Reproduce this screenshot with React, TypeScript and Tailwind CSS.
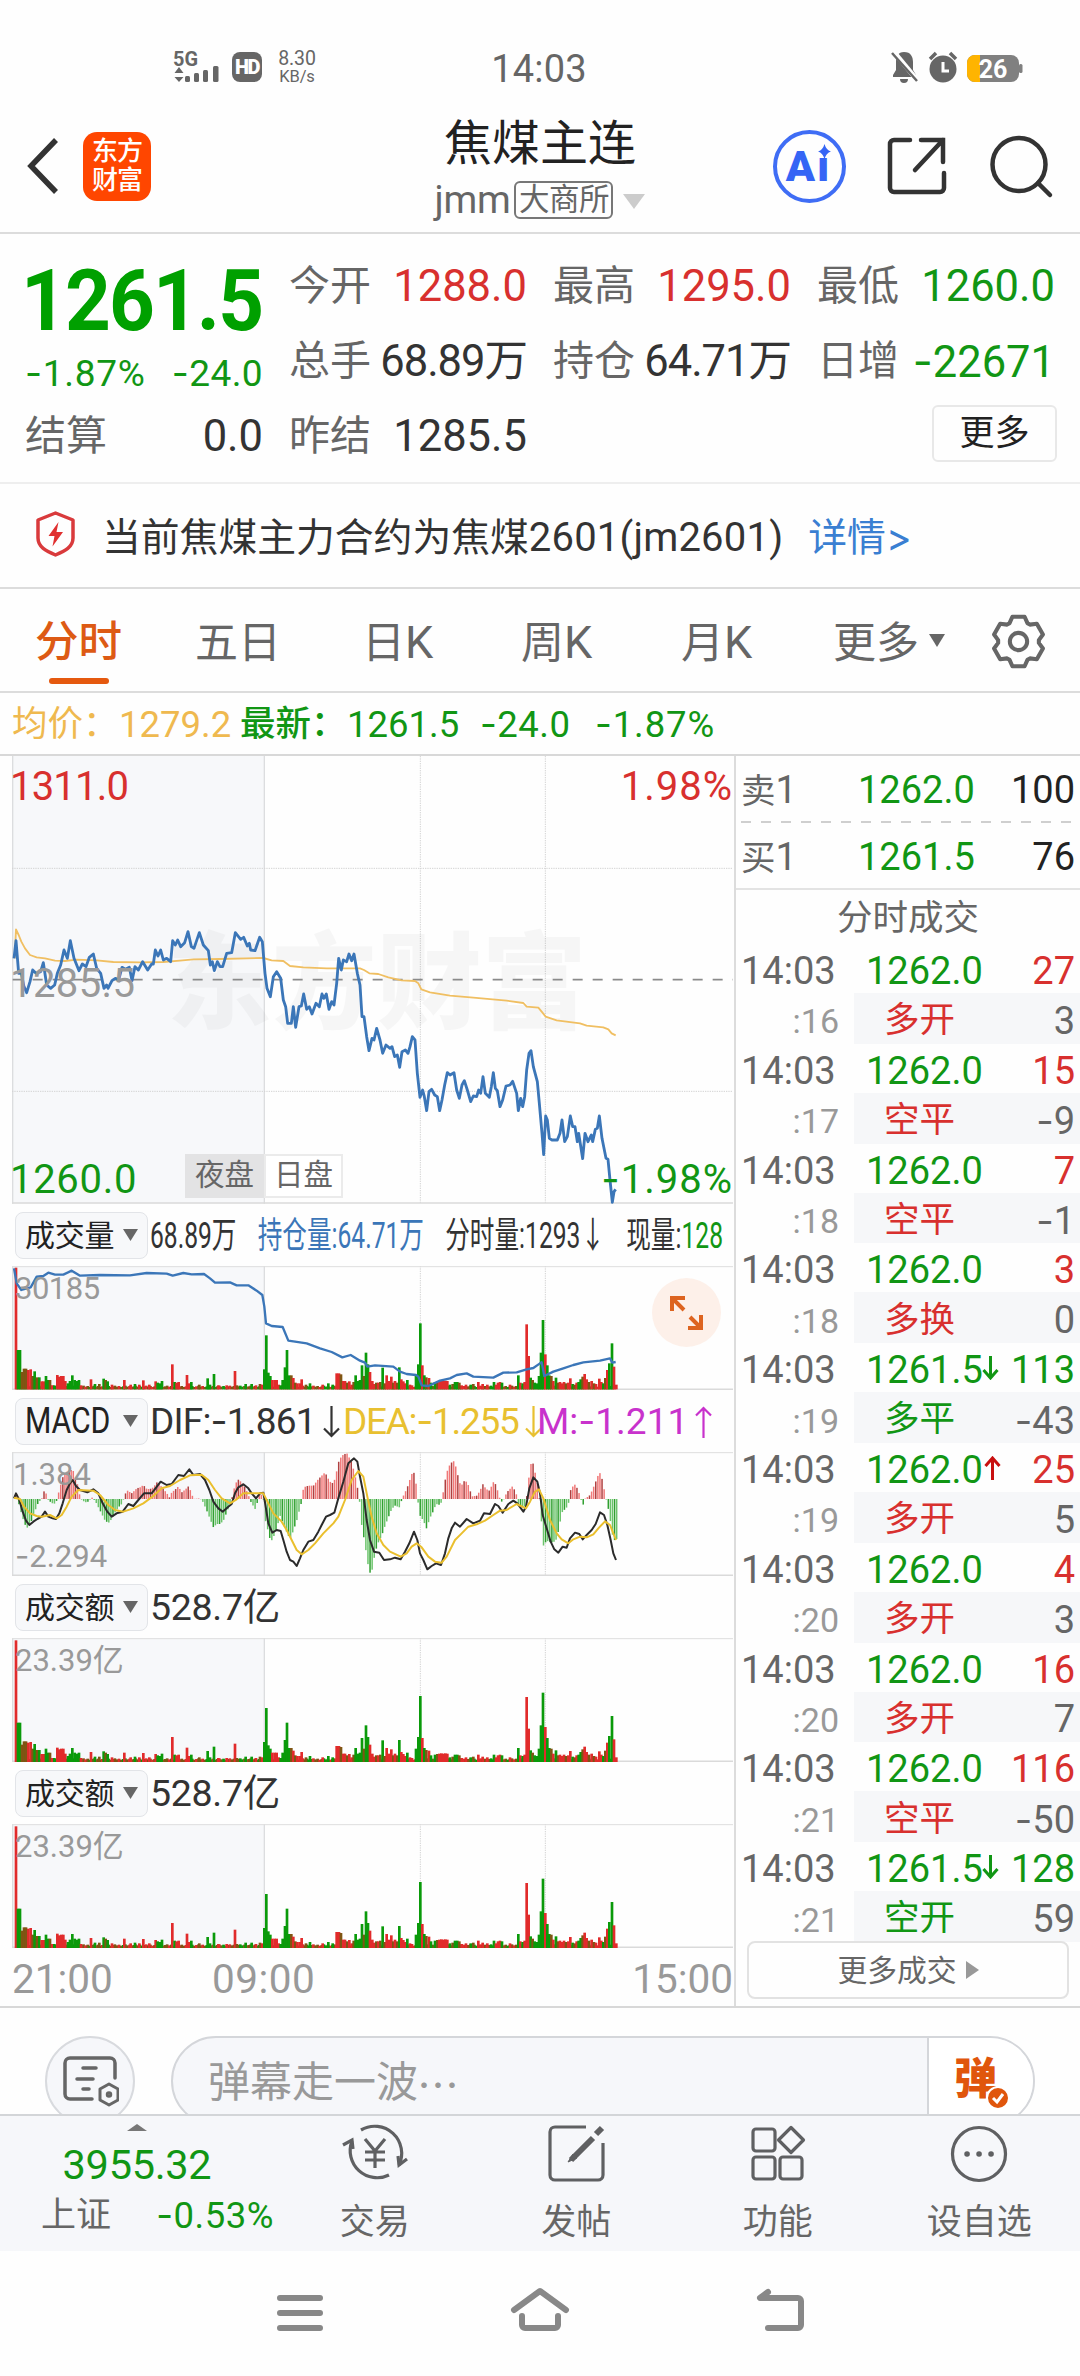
import React from "react";

type Tone = "r" | "g" | "o";

const GREEN = "text-[#119614]";
const RED = "text-[#d8302e]";
const TONES: Record<Tone, string> = { r: "#e12b2b", g: "#0a9a0a", o: "#7f5513" };

/* ---- chart series; x runs 0-2202, y is in thirds of a pixel ---- */

const PRICE =
  "42,655 48,602 56,700 64,700 72,740 80,758 90,725 98,690 108,700 122,695 130,668 140,735 152,745 164,735 172,700 182,675 192,630 202,655 211,602 222,655 237,692 247,672 258,680 268,652 280,642 290,685 302,700 312,745 320,735 324,745 336,722 346,715 356,720 366,682 376,688 388,682 396,722 405,680 415,690 428,665 443,690 455,672 460,672 466,630 474,648 482,630 490,660 500,655 512,665 518,602 526,615 533,600 542,620 554,608 564,575 574,620 582,625 598,578 610,615 625,632 631,675 637,665 643,692 652,665 660,680 668,680 680,640 695,638 706,578 722,598 731,592 742,618 748,610 752,630 765,632 779,592 787,605 795,700 801,745 811,770 820,710 830,695 842,715 850,780 857,800 863,850 874,850 880,800 887,862 897,800 904,798 911,762 920,808 928,800 936,822 948,790 958,800 966,762 972,775 979,762 987,808 995,785 1002,795 1010,730 1016,655 1024,690 1030,660 1040,665 1047,642 1055,662 1062,642 1072,700 1080,735 1086,830 1092,830 1100,890 1107,932 1116,895 1122,900 1130,865 1140,900 1148,940 1158,915 1170,925 1176,920 1184,950 1192,945 1199,982 1206,935 1216,930 1224,940 1230,920 1237,890 1245,900 1252,1000 1260,1072 1268,1050 1273,1070 1280,1112 1287,1055 1295,1048 1304,1065 1312,1070 1319,1112 1326,1080 1334,1035 1342,998 1350,1005 1362,998 1370,1050 1378,1075 1386,1035 1393,1022 1402,1050 1412,1085 1420,1068 1430,1070 1436,1050 1442,1060 1449,1010 1456,1060 1468,1072 1474,1040 1480,998 1486,1045 1492,1052 1500,1100 1508,1080 1518,1038 1530,1035 1538,1024 1550,1060 1555,1112 1562,1075 1568,1100 1574,1070 1580,990 1587,940 1593,932 1600,980 1612,1025 1618,1090 1626,1180 1631,1244 1637,1128 1642,1140 1648,1195 1656,1200 1672,1200 1680,1180 1686,1140 1694,1205 1702,1190 1711,1128 1718,1160 1725,1160 1732,1205 1736,1180 1748,1256 1755,1180 1764,1205 1774,1185 1778,1205 1786,1168 1792,1165 1798,1128 1806,1195 1818,1255 1824,1258 1830,1320 1837,1387 1842,1355 1847,1348";

const AVERAGE =
  "44,655 48,568 56,585 64,605 75,625 90,645 110,652 135,655 165,662 195,663 230,659 290,661 340,666 420,667 490,666 540,662 580,658 660,657 740,655 790,654 815,661 850,663 870,678 910,682 980,685 1080,685 1092,690 1108,700 1135,702 1165,712 1205,721 1245,723 1255,730 1264,748 1290,757 1350,767 1420,773 1520,782 1570,789 1580,800 1615,803 1625,815 1637,830 1670,841 1740,850 1760,857 1810,862 1825,868 1835,880 1847,886";

const OPEN_INTEREST =
  "42,205 50,250 64,270 92,262 110,230 130,228 145,218 165,224 190,224 215,212 240,227 300,225 390,226 440,219 500,221 518,227 550,219 575,223 612,222 630,235 645,248 690,247 710,256 745,256 770,272 787,285 793,320 798,370 815,378 848,381 865,422 920,430 960,445 995,456 1027,472 1052,465 1080,482 1095,488 1102,500 1125,496 1180,500 1200,515 1220,522 1248,525 1255,530 1265,556 1285,558 1320,542 1350,535 1370,525 1400,520 1420,530 1480,533 1510,518 1550,517 1580,508 1600,504 1620,490 1625,487 1633,528 1660,515 1690,505 1720,495 1750,487 1800,482 1830,475 1837,488 1847,486";

const DIF =
  "42,895 48,880 58,900 68,935 78,962 88,975 100,965 112,957 125,950 135,935 145,950 158,955 168,957 178,940 188,910 200,870 210,850 218,840 228,858 240,870 262,877 280,868 295,880 308,910 322,935 335,950 350,940 368,935 385,912 400,918 415,900 432,880 455,880 482,845 500,855 515,852 535,825 552,828 568,808 580,825 600,822 615,840 628,870 640,905 655,925 668,935 685,920 695,912 705,880 715,862 730,853 745,865 755,880 768,895 780,880 790,878 797,920 805,970 817,998 830,990 842,993 850,1020 860,1055 870,1080 880,1085 890,1098 900,1075 910,1050 925,1025 940,1020 955,995 965,975 978,950 990,945 1003,938 1015,895 1030,845 1045,790 1062,775 1072,785 1080,830 1090,880 1100,960 1110,1020 1122,1055 1138,1058 1152,1080 1170,1078 1185,1073 1202,1078 1215,1055 1228,1030 1242,995 1252,1020 1260,1060 1270,1080 1282,1108 1295,1098 1308,1090 1323,1095 1335,1060 1345,1015 1355,985 1365,968 1380,980 1400,957 1420,970 1440,962 1452,940 1470,942 1485,912 1495,918 1508,938 1525,912 1540,902 1552,910 1570,935 1578,920 1588,865 1600,832 1612,845 1620,880 1628,945 1640,985 1652,1025 1663,1048 1675,1058 1688,1040 1700,1043 1710,1015 1725,998 1738,1002 1748,1018 1760,1005 1775,990 1787,972 1800,937 1812,945 1822,975 1832,1020 1840,1060 1848,1080";

const DEA =
  "42,893 60,897 72,920 90,940 110,948 125,950 150,945 170,955 185,945 200,920 215,890 235,870 280,872 300,885 325,915 345,930 370,935 400,925 430,910 460,888 485,865 510,858 540,840 570,826 605,824 625,840 645,870 665,895 690,910 710,898 730,880 760,880 790,880 805,910 820,940 845,965 860,990 875,1020 890,1050 905,1063 925,1050 945,1030 970,1000 1000,970 1015,950 1035,900 1055,840 1075,813 1090,830 1102,890 1115,950 1130,1000 1150,1035 1170,1055 1202,1070 1220,1060 1235,1040 1250,1030 1265,1042 1285,1070 1305,1085 1325,1088 1340,1070 1365,1020 1385,1000 1405,980 1430,973 1455,962 1480,945 1500,932 1520,930 1550,912 1578,925 1590,905 1605,875 1617,868 1630,895 1650,960 1670,1000 1685,1018 1705,1030 1720,1018 1740,1010 1760,1012 1780,1003 1795,985 1815,964 1830,975 1840,1000 1848,1020";

const HISTOGRAM =
  "42:5 48:25 54:-5 60:-30 66:-50 72:-70 80:-88 86:-80 92:-75 98:-50 105:-35 115:-10 125:0 130:22 136:25 142:0 150:-8 160:-15 168:-12 173:10 180:35 186:60 192:75 200:82 210:80 217:95 224:65 232:45 238:15 245:-2 255:-10 265:-8 275:5 285:-5 295:-25 305:-45 315:-65 325:-72 335:-60 345:-40 355:-25 365:-15 370:-2 375:15 385:28 392:15 400:22 410:32 420:35 430:42 440:30 450:30 460:35 470:50 480:42 490:30 500:18 508:5 515:20 525:28 535:38 545:20 555:28 565:38 573:22 580:0 600:2 608:-8 618:-30 630:-60 640:-85 650:-75 660:-75 670:-65 680:-40 692:-10 700:20 705:45 715:58 725:50 735:35 745:12 752:-8 765:-30 772:-10 778:20 784:12 790:0 796:-65 805:-100 812:-130 822:-110 832:-80 840:-50 850:-75 860:-100 870:-120 880:-95 890:-65 900:-25 906:-5 910:35 925:40 940:40 955:60 965:70 975:80 985:60 995:45 1005:60 1015:110 1025:130 1040:138 1055:110 1065:70 1075:20 1080:-20 1085:-80 1092:-120 1100:-170 1105:-205 1112:-228 1118:-205 1125:-160 1135:-130 1145:-110 1155:-80 1165:-55 1175:-30 1185:-20 1198:-25 1205:-3 1212:15 1220:30 1230:60 1237:80 1243:78 1248:45 1254:-10 1260:-50 1270:-65 1280:-90 1288:-60 1298:-40 1308:-15 1320:-18 1326:-5 1332:40 1340:80 1350:105 1360:115 1370:90 1377:50 1385:42 1393:55 1402:50 1410:25 1417:8 1430:10 1440:25 1448:45 1458:30 1468:25 1475:40 1482:55 1490:35 1498:5 1505:-8 1512:0 1520:20 1537:38 1548:20 1552:-10 1562:-25 1575:-22 1582:20 1588:80 1594:112 1600:105 1607:70 1615:30 1620:-20 1626:-90 1630:-140 1640:-125 1650:-130 1660:-130 1670:-120 1678:-80 1686:-40 1700:-25 1707:-8 1712:28 1723:45 1733:30 1742:2 1748:-22 1754:0 1770:12 1780:35 1790:60 1798:82 1806:60 1812:30 1818:0 1823:-20 1830:-60 1840:-125 1850:-120"
    .split(" ")
    .map((p) => p.split(":").map(Number));

const VOLUME =
  "48:365r 54:118g 60:118g 66:52o 72:62o 78:62o 85:58r 92:60r 98:40o 104:54g 111:36o 118:36g 125:24r 131:24r 138:40g 144:28g 150:28o 157:12r 163:12g 172:43r 178:38r 184:40r 190:40r 196:25r 204:18g 210:25g 217:42g 224:28g 230:25g 237:28g 243:12r 273:30r 285:16g 298:16o 311:32g 317:28o 323:24g 336:14r 373:28r 392:14r 405:16g 418:14r 430:27r 448:14r 467:24r 473:20g 480:18g 486:25g 517:75r 524:22g 530:20r 536:22r 561:43r 567:18r 574:22g 598:14o 623:33g 630:14g 642:46g 655:12r 680:12r 705:55r 711:12o 737:16g 755:16g 768:12r 780:16o 787:14r 793:60g 799:162g 805:50g 811:40g 817:28r 824:28r 830:28r 836:14r 842:12g 848:28g 855:66g 861:118g 867:42g 874:42o 880:34r 886:20o 892:18r 899:18r 905:30r 918:14o 930:18g 968:14r 985:18g 998:14g 1010:48r 1017:48r 1023:45o 1030:25r 1035:25r 1042:20o 1048:24r 1055:14r 1061:22o 1067:42g 1073:25g 1080:28g 1086:72g 1092:40o 1098:110g 1104:75g 1110:52r 1117:25r 1123:16r 1129:20o 1135:20r 1141:22o 1148:65g 1154:18o 1160:42r 1166:25r 1174:38r 1180:20o 1185:25r 1192:20o 1198:66g 1204:30r 1210:24r 1216:18r 1222:28g 1230:14r 1236:12r 1248:40g 1255:75g 1261:198g 1267:72r 1273:42g 1279:36o 1287:34r 1293:20g 1305:22g 1312:24o 1318:25r 1324:26r 1330:25r 1336:26r 1342:25r 1350:14g 1358:16o 1365:22g 1372:22g 1378:20o 1385:12r 1398:14r 1412:14g 1420:16o 1435:22r 1448:16r 1462:14r 1482:22g 1488:14r 1494:20r 1500:22r 1506:20g 1530:14r 1555:42g 1561:20r 1568:18g 1574:22r 1580:195r 1586:100r 1592:35g 1598:28o 1604:20g 1612:18g 1617:40g 1623:110g 1629:208g 1636:105r 1642:72g 1648:42g 1654:40o 1660:25r 1668:35g 1674:20o 1680:22r 1686:18r 1692:22r 1698:18o 1705:20r 1711:33r 1718:16g 1724:14o 1730:20r 1736:22g 1742:30g 1748:38o 1754:46r 1760:30r 1767:22o 1775:25r 1782:18o 1788:16r 1798:32r 1804:22r 1810:18g 1816:34o 1822:58r 1828:78g 1836:138g 1842:68r 1849:14r"
    .split(" ")
    .map((p) => {
      const [x, rest] = p.split(":");
      return { x: Number(x), h: parseInt(rest, 10), tone: rest.slice(-1) as Tone };
    });

const QUIET = Array.from({ length: 287 }, (_, i) => ({
  x: 50 + i * 6.27,
  h: 7 + ((i * 7) % 5),
  tone: (["o", "r", "o", "g", "o", "r"] as Tone[])[(i * 5 + (i >> 2)) % 6],
}));

function histogramAt(x: number) {
  for (let i = 1; i < HISTOGRAM.length; i++) {
    const [x0, v0] = HISTOGRAM[i - 1];
    const [x1, v1] = HISTOGRAM[i];
    if (x <= x1) return v0 + ((v1 - v0) * (x - x0)) / (x1 - x0);
  }
  return 0;
}

/* A number whose leading minus uses the wider Inter dash. */
function Num({ children }: { children: string }) {
  if (!children.startsWith("-")) return <>{children}</>;
  return (
    <>
      <span className="font-[Inter]">-</span>
      {children.slice(1)}
    </>
  );
}

function VolumeBars({ base }: { base: number }) {
  return (
    <g>
      {[...QUIET, ...VOLUME].map((b, i) => (
        <rect key={i} x={b.x - 4} y={base - b.h} width={8} height={b.h} fill={TONES[b.tone]} />
      ))}
    </g>
  );
}

function Grid({ top, bottom }: { top: number; bottom: number }) {
  return (
    <g>
      <rect x={38} y={top} width={754} height={bottom - top} fill="#f7f8fa" />
      <path d={`M38 ${top}V${bottom}M793 ${top}V${bottom}`} stroke="#dcdddf" strokeWidth={4} />
      <path d={`M1261 ${top}V${bottom}M1636 ${top}V${bottom}`} stroke="#d3d3d3" strokeWidth={3} strokeDasharray="4 3" />
      <path d={`M36 ${bottom - 2}H2199`} stroke="#dadada" strokeWidth={5} />
    </g>
  );
}

function SubChart({ top, bottom, children }: { top: number; bottom: number; children: React.ReactNode }) {
  return (
    <svg className="block h-[124px] w-[734px]" viewBox={`0 ${top} 2202 372`}>
      <Grid top={top} bottom={bottom} />
      <path d={`M36 ${top + 2}H2199`} stroke="#dedede" strokeWidth={3} />
      {children}
    </svg>
  );
}

function Caret({ className, d = "M0 0H15L7.5 12Z" }: { className: string; d?: string }) {
  return (
    <svg className={className} viewBox="0 0 15 12" preserveAspectRatio="none" fill="currentColor">
      <path d={d} />
    </svg>
  );
}

function IndicatorRow({ name, children }: { name: React.ReactNode; children: React.ReactNode }) {
  return (
    <div className="flex h-[62px] items-center pl-[15px]">
      <div className="flex h-[47px] w-[133px] shrink-0 items-center justify-between rounded-[8px] border border-[#e2e4e8] bg-[#f7f8fa] pr-[9px] pl-[9px] text-[30px] tracking-[-0.2px] text-[#222]">
        <span className="whitespace-nowrap">{name}</span>
        <Caret className="h-[12px] w-[15px] text-[#666]" />
      </div>
      {children}
    </div>
  );
}

/* ---- page sections ---- */

function StatusBar() {
  return (
    <div className="flex h-[112px] items-start pt-[50px] text-[#666]">
      <svg className="mt-[-10px] ml-[172px] h-[44px] w-[50px] shrink-0" viewBox="0 -10 50 44" fill="#666">
        <text x="1" y="16" fontSize="19.500" fontWeight="700" fontFamily="Roboto" textLength="25" lengthAdjust="spacingAndGlyphs">5G</text>
        <path d="M7 17l4.500 6h-9zM7 32l4.500-5h-9z" />
        <rect x="13" y="26" width="5" height="6" rx="1.500" />
        <rect x="22" y="23" width="5" height="9" rx="1.500" />
        <rect x="31" y="20" width="5" height="12" rx="1.500" />
        <rect x="41" y="16" width="5.500" height="16" rx="1.500" />
      </svg>
      <div className="mt-[2px] ml-[10px] flex h-[30px] w-[30px] items-center justify-center rounded-[8px] bg-[#666] text-[20px] font-black tracking-[-1.500px] text-white">HD</div>
      <div className="ml-[15px] w-[40px] text-center text-[19.500px] leading-[18px] tracking-[-0.100px]">
        8.30
        <div className="text-[16.500px] leading-[17px] whitespace-nowrap">KB/s</div>
      </div>
      <div className="ml-[171px] w-[102px] text-center text-[38px] leading-[38px] tracking-[0.2px]">14:03</div>
      <svg className="ml-[300px] h-[34px] w-[134px] shrink-0" viewBox="0 0 134 34">
        <path d="M14 2c7 0 9 5 9 10v8l3 5v2H3v-2l3-5v-8C6 7 8 2 14 2zM10 29h8a4 4 0 0 1-8 0z" fill="#666" />
        <path d="M3 1L28 31" stroke="#fff" strokeWidth="5" />
        <path d="M2 3L27 31" stroke="#666" strokeWidth="2.500" />
        <circle cx="53" cy="19" r="13.500" fill="#666" />
        <path d="M40 9l6-6M66 9l-6-6" stroke="#666" strokeWidth="3.500" />
        <path d="M53 12v9h6" stroke="#fff" strokeWidth="3" fill="none" />
        <rect x="77" y="5" width="52" height="27" rx="8" fill="#808080" />
        <rect x="129" y="14" width="3.500" height="9" rx="1.500" fill="#808080" />
        <path d="M90 5h-5a8 8 0 0 0-8 8v11a8 8 0 0 0 8 8h5z" fill="#ffb400" />
        <text x="103" y="27.500" textAnchor="middle" fontSize="25" fontWeight="700" fontFamily="Roboto" fill="#fff">26</text>
      </svg>
    </div>
  );
}

function Header() {
  return (
    <div className="relative flex h-[122px] items-center border-b-2 border-[#dcdcdc]">
      <svg className="ml-[24px] h-[60px] w-[36px] -translate-y-[6px]" viewBox="0 0 36 60" fill="none" stroke="#333" strokeWidth="5.500">
        <path d="M32 4L7 30l25 26" />
      </svg>
      <div className="ml-[23px] flex h-[69px] w-[68px] -translate-y-[6px] flex-col items-center justify-center rounded-[14px] bg-[#ff4600] pb-[1px] text-[26px] leading-[29px] font-medium tracking-[-1px] text-white">
        <span>东方</span>
        <span>财富</span>
      </div>
      <div className="ml-[237px] flex w-[304px] flex-col items-center">
        <div className="-mt-[2px] text-[48px] leading-[60px] text-[#222]">焦煤主连</div>
        <div className="flex h-[54px] items-center text-[38.500px] text-[#666]">
          <span className="-mt-[2px] tracking-[-0.300px]">jmm</span>
          <span className="-mt-[2px] ml-[4px] flex h-[38px] w-[99px] items-center justify-center rounded-[6px] border-2 border-[#777] text-[30.500px] tracking-[-0.500px]">大商所</span>
          <Caret className="ml-[10px] h-[15px] w-[22px] text-[#ccc]" />
        </div>
      </div>
      <div className="absolute top-[18px] left-[773px] flex h-[73px] w-[73px] items-center justify-center rounded-full border-4 border-[#3f6df5] text-[43px] font-black tracking-[1px] text-[#3565f5]">
        <span className="-ml-[3px] flex leading-none">A<span className="relative ml-[1px]">ı
          <svg className="absolute -top-[1px] left-[1px] h-[15px] w-[13px]" viewBox="0 0 12 14" fill="#3565f5"><path d="M6 0Q7.500 5.500 12 7 7.500 8.500 6 14 4.500 8.500 0 7 4.500 5.500 6 0Z" /></svg>
        </span></span>
      </div>
      <svg className="absolute top-[23px] left-[885px] h-[64px] w-[64px]" viewBox="0 0 64 64" fill="none" stroke="#333" strokeWidth="4.500">
        <path d="M25 5H9a4 4 0 0 0-4 4v44a4 4 0 0 0 4 4h46a4 4 0 0 0 4-4V38" strokeLinecap="round" />
        <path d="M36 5h22v22M58 5L30 35" strokeLinecap="round" />
      </svg>
      <svg className="absolute top-[21px] left-[988px] h-[66px] w-[66px]" viewBox="0 0 66 66" fill="none" stroke="#333" strokeWidth="4.500">
        <circle cx="31" cy="31.500" r="26.500" />
        <path d="M50 50l12 12" strokeLinecap="round" />
      </svg>
    </div>
  );
}

function Quote({ label, value, tone = "text-[#333]", tight = "" }: { label: string; value: string; tone?: string; tight?: string }) {
  return (
    <div className="flex h-[75px] items-center justify-between pt-[1px] whitespace-nowrap">
      <span className="text-[41px] text-[#666]">{label}</span>
      <span className={`text-[43.500px] ${tight} ${tone}`}><Num>{value}</Num></span>
    </div>
  );
}

function QuotePanel() {
  return (
    <div className="grid h-[250px] grid-cols-4 gap-x-[26px] border-b-2 border-[#eee] px-[25px] pt-[15px]">
      <div>
        <div className="flex h-[98px] items-center pt-[8px] text-[85px] font-bold text-[#00a000]">
          <span className="-ml-[4px] inline-block origin-left scale-x-[0.940] tracking-[-2px]">1261.5</span>
        </div>
        <div className={`flex h-[52px] items-center justify-between text-[37px] ${GREEN}`}>
          <span className="tracking-[0.700px]"><Num>-1.87%</Num></span>
          <span className="tracking-[0.400px]"><Num>-24.0</Num></span>
        </div>
        <Quote label="结算" value="0.0" />
      </div>
      <div>
        <Quote label="今开" value="1288.0" tone={RED} />
        <Quote label="总手" value="68.89万" tight="tracking-[-1px]" />
        <Quote label="昨结" value="1285.5" />
      </div>
      <div>
        <Quote label="最高" value="1295.0" tone={RED} />
        <Quote label="持仓" value="64.71万" tight="tracking-[-1px]" />
      </div>
      <div className="flex flex-col">
        <Quote label="最低" value="1260.0" tone={GREEN} />
        <Quote label="日增" value="-22671" tone={GREEN} />
        <div className="mt-[6px] -mr-[2px] flex h-[57px] w-[125px] items-center justify-center self-end rounded-[6px] border-2 border-[#e8e8e8] pt-[1px] text-[35px] text-[#222]">更多</div>
      </div>
    </div>
  );
}

function Notice() {
  return (
    <div className="flex h-[105px] items-center border-b-2 border-[#dcdcdc] text-[38.8px] whitespace-nowrap text-[#333]">
      <svg className="ml-[34px] h-[48px] w-[43px] -translate-y-[2px]" viewBox="0 0 43 48" fill="none">
        <path d="M21.500 3L39 10v18c0 9-8 13-17.500 17C12 41 4 37 4 28V10z" stroke="#d93a3c" strokeWidth="3.500" strokeLinejoin="round" />
        <path d="M24.500 12L14.500 26h6l-2 10.500L29 22h-6.500z" fill="#e03030" />
      </svg>
      <span className="ml-[25px] pt-[4px]">当前焦煤主力合约为焦煤<span className="text-[40px] tracking-[0.200px]">2601(jm2601)</span></span>
      <span className="ml-[25px] pt-[4px] text-[#3a7fd2]">详情<span className="font-[Inter]">&gt;</span></span>
    </div>
  );
}

const GEAR = Array.from({ length: 6 }, (_, k) =>
  [[-26, 20], [-14, 25], [14, 25], [26, 20]]
    .map(([a, r]) => {
      const t = ((k * 60 - 90 + a) * Math.PI) / 180;
      return `${(28 + r * Math.cos(t)).toFixed(1)} ${(28 + r * Math.sin(t)).toFixed(1)}`;
    })
    .join("L"),
).join("L");

function Tabs() {
  return (
    <div className="relative h-[104px] border-b-2 border-[#dcdcdc] text-[43px] text-[#666]">
      <div className="flex h-full items-center pt-[6px]">
        <span className="ml-[35px] w-[160px] text-[43.500px] font-medium text-[#dd5a14]">分时</span>
        <span className="w-[167px]">五日</span>
        <span className="w-[159px]">日<span className="text-[45px]">K</span></span>
        <span className="w-[160px]">周<span className="text-[45px]">K</span></span>
        <span className="w-[152px]">月<span className="text-[45px]">K</span></span>
        <span>更多</span>
        <Caret className="mb-[5px] ml-[10px] h-[13px] w-[16px]" />
      </div>
      <svg className="absolute top-[24px] left-[990px] h-[57px] w-[57px]" viewBox="0 0 56 56" fill="none" stroke="#666" strokeWidth="4" strokeLinejoin="round">
        <path d={`M${GEAR}Z`} />
        <circle cx="28" cy="28" r="8.500" />
      </svg>
      <div className="absolute bottom-[7px] left-[49px] h-[6px] w-[60px] rounded-full bg-[#e5590f]" />
    </div>
  );
}

function Summary() {
  return (
    <div className={`flex h-[63px] items-center border-b-2 border-[#d8d8d8] pt-[3px] pl-[12px] text-[36.500px] whitespace-nowrap ${GREEN}`}>
      <span className="w-[107px] text-[35.500px] text-[#efb94f]">均价：</span>
      <span className="w-[121px] text-[#efb94f]">1279.2</span>
      <span className="w-[107px] text-[35.500px] font-medium">最新：</span>
      <span className="w-[133px]">1261.5</span>
      <span className="w-[115px] tracking-[0.500px]"><Num>-24.0</Num></span>
      <span className="tracking-[0.900px]"><Num>-1.87%</Num></span>
    </div>
  );
}

function PriceChart() {
  return (
    <div className="relative h-[448px] text-[40px] leading-none">
      <svg className="block h-[448px] w-[734px]" viewBox="0 48 2202 1344">
        <Grid top={48} bottom={1391} />
        <path d="M36 385H2199M36 1054H2199" stroke="#d3d3d3" strokeWidth={3} strokeDasharray="4 3" />
        <text x={500} y={840} fontSize={315} fontWeight={900} fontFamily="Noto Sans CJK SC" fill="#000" fillOpacity={0.03}>东方财富</text>
        <path d="M38 719H2199" stroke="#8a8a8a" strokeWidth={5} strokeDasharray="30 30" />
        <polyline points={AVERAGE} fill="none" stroke="#f0bf62" strokeWidth={5.500} strokeLinejoin="round" />
        <polyline points={PRICE} fill="none" stroke="#3b76b8" strokeWidth={8.500} strokeLinejoin="round" />
      </svg>
      <span className={`absolute top-[11px] left-[10px] tracking-[-0.800px] ${RED}`}>1311.0</span>
      <span className={`absolute top-[11px] right-[1px] tracking-[1px] ${RED}`}>1.98%</span>
      <span className="absolute top-[208px] left-[10px] tracking-[0.400px] text-[#999]">1285.5</span>
      <span className={`absolute bottom-[4px] left-[10px] tracking-[0.700px] ${GREEN}`}>1260.0</span>
      <span className={`absolute right-[1px] bottom-[4px] tracking-[1px] ${GREEN}`}><Num>-1.98%</Num></span>
      <div className="absolute bottom-[6px] left-[185px] flex h-[44px] text-[29.5px] text-[#666]">
        <span className="flex w-[79px] items-center justify-center bg-[#e3e3e4]">夜盘</span>
        <span className="flex w-[79px] items-center justify-center border-2 border-[#ebebeb] bg-white">日盘</span>
      </div>
    </div>
  );
}

function Arrow({ up = false }: { up?: boolean }) {
  return (
    <svg className="ml-[7px] h-[32px] w-[17px] shrink-0" viewBox="0 0 17 32" fill="none" stroke="currentColor" strokeWidth="2.200">
      <path d={up ? "M8.500 32V2M1 9.500l7.500-7.500L16 9.500" : "M8.500 0v30M1 22.500l7.500 7.500 7.500-7.500"} />
    </svg>
  );
}

function Charts() {
  return (
    <div className="w-[734px]">
      <PriceChart />
      <IndicatorRow name="成交量">
        <div className="-mr-[300px] ml-[2px] flex w-[872px] shrink-0 origin-left scale-x-[0.684] gap-[31px] pt-[2px] text-[36px] whitespace-nowrap text-[#333]">
          <span>68.89万</span>
          <span className="text-[#3b76b8]">持仓量:64.71万</span>
          <span>分时量:1293↓</span>
          <span>现量:<span className={GREEN}>128</span></span>
        </div>
      </IndicatorRow>
      <div className="relative">
        <SubChart top={198} bottom={570}>
          <VolumeBars base={568} />
          <polyline points={OPEN_INTEREST} fill="none" stroke="#3b76b8" strokeWidth={7} strokeLinejoin="round" />
        </SubChart>
        <span className="absolute top-[5px] left-[15px] text-[31px] leading-[36px] tracking-[-0.500px] text-[#999]">30185</span>
        <svg className="absolute top-[12px] right-[13px] h-[69px] w-[69px]" viewBox="0 0 69 69" fill="none" stroke="#dd6420" strokeWidth="4">
          <circle cx="34.500" cy="34.500" r="34.500" fill="#fdf0e9" stroke="none" />
          <path d="M20 33V20h13M20 20l12 12M49 37v13H36M49 50L38 39" />
        </svg>
      </div>
      <IndicatorRow name={<span className="-mr-4 inline-block origin-left scale-x-[0.840] text-[36px]">MACD</span>}>
        <div className="ml-[2px] flex pt-[1px] text-[37px] whitespace-nowrap text-[#333]">
          <span className="flex w-[193px] items-center tracking-[-0.800px]"><span>DIF:<Num>-1.861</Num></span><Arrow /></span>
          <span className="flex w-[194px] items-center tracking-[-1.300px] text-[#e8c030]"><span>DEA:<Num>-1.255</Num></span><Arrow /></span>
          <span className="flex items-center text-[#c832cc]"><span>M:<Num>-1.211</Num></span><Arrow up /></span>
        </div>
      </IndicatorRow>
      <div className="relative">
        <SubChart top={756} bottom={1128}>
          {Array.from({ length: 289 }, (_, i) => {
            const x = 44 + i * 6.27;
            const v = histogramAt(x);
            const fill = v > 0 ? (i % 3 === 2 ? "#b04040" : "#f07878") : i % 3 === 2 ? "#30a030" : "#6cc46c";
            return <rect key={i} x={x - 2} y={v > 0 ? 897 - v : 897} width={4.500} height={Math.abs(v)} fill={fill} />;
          })}
          <polyline points={DIF} fill="none" stroke="#2b2b2b" strokeWidth={6} strokeLinejoin="round" />
          <polyline points={DEA} fill="none" stroke="#eabf2d" strokeWidth={6} strokeLinejoin="round" />
        </SubChart>
        <span className="absolute top-[5px] left-[13px] text-[31px] leading-[36px] text-[#999]">1.384</span>
        <span className="absolute bottom-[1px] left-[15px] text-[31px] leading-[36px] text-[#999]"><Num>-2.294</Num></span>
      </div>
      {[0, 1].map((n) => (
        <React.Fragment key={n}>
          <IndicatorRow name="成交额">
            <span className="ml-[2px] pt-[1px] text-[37.500px] tracking-[-0.300px] text-[#333]">528.7亿</span>
          </IndicatorRow>
          <div className="relative">
            <SubChart top={198} bottom={570}>
              <VolumeBars base={570} />
            </SubChart>
            <span className="absolute top-[5px] left-[15px] text-[31px] leading-[36px] text-[#999]">23.39亿</span>
          </div>
        </React.Fragment>
      ))}
      <div className="relative flex h-[59px] items-center justify-between pt-[4px] pr-[1px] pl-[12px] text-[40.500px] text-[#999]">
        <span>21:00</span>
        <span className="absolute left-[212px] tracking-[0.500px]">09:00</span>
        <span>15:00</span>
      </div>
    </div>
  );
}

type Trade = { sec: string; price: string; dir?: "up" | "down"; kind: string; size: string; tone: "r" | "g"; delta: string };

const TRADES: Trade[] = [
  { sec: ":16", price: "1262.0", kind: "多开", size: "27", tone: "r", delta: "3" },
  { sec: ":17", price: "1262.0", kind: "空平", size: "15", tone: "r", delta: "-9" },
  { sec: ":18", price: "1262.0", kind: "空平", size: "7", tone: "r", delta: "-1" },
  { sec: ":18", price: "1262.0", kind: "多换", size: "3", tone: "r", delta: "0" },
  { sec: ":19", price: "1261.5", dir: "down", kind: "多平", size: "113", tone: "g", delta: "-43" },
  { sec: ":19", price: "1262.0", dir: "up", kind: "多开", size: "25", tone: "r", delta: "5" },
  { sec: ":20", price: "1262.0", kind: "多开", size: "4", tone: "r", delta: "3" },
  { sec: ":20", price: "1262.0", kind: "多开", size: "16", tone: "r", delta: "7" },
  { sec: ":21", price: "1262.0", kind: "空平", size: "116", tone: "r", delta: "-50" },
  { sec: ":21", price: "1261.5", dir: "down", kind: "空开", size: "128", tone: "g", delta: "59" },
];

function TradeRow({ t }: { t: Trade }) {
  const tone = t.tone === "r" ? RED : GREEN;
  return (
    <div className="h-[99.800px] text-[38px] leading-none">
      <div className="flex h-[49px] items-center pt-[5px] pr-[5px] pl-[5px]">
        <span className="w-[125px] text-[#666]">14:03</span>
        <span className={GREEN}>{t.price}</span>
        {t.dir && (
          <svg className={`h-[24px] w-[17px] -translate-y-[2px] ${t.dir === "up" ? "ml-[1px]" : "-ml-[1px]"}`} viewBox="0 0 17 24" fill="none" stroke={t.dir === "up" ? "#c81010" : "#119614"} strokeWidth="3">
            <path d={t.dir === "up" ? "M8.500 24V3M1.500 10l7-8 7 8" : "M8.500 0v21M1.500 14l7 8 7-8"} />
          </svg>
        )}
        <span className={`ml-auto ${tone}`}>{t.size}</span>
      </div>
      <div className="flex h-[50.800px] items-center">
        <span className="w-[103px] pt-[6px] text-right text-[34px] text-[#999]">{t.sec}</span>
        <div className="ml-[15px] flex h-full flex-1 items-center justify-between bg-[#f6f7f9] pt-[5px] pr-[5px] pl-[30px]">
          <span className={`text-[35.500px] ${tone}`}>{t.kind}</span>
          <span className="text-[#666]"><Num>{t.delta}</Num></span>
        </div>
      </div>
    </div>
  );
}

function OrderLine({ label, price, size }: { label: string; price: string; size: string }) {
  return (
    <div className="flex h-[65px] items-center pt-[4px] pr-[5px] pl-[5px] text-[38px]">
      <span className="w-[117px] text-[#666]"><span className="text-[34.500px]">{label}</span>1</span>
      <span className={GREEN}>{price}</span>
      <span className="ml-auto text-[#222]">{size}</span>
    </div>
  );
}

function TradePanel() {
  return (
    <div className="flex h-full flex-1 flex-col border-l-2 border-[#dcdcdc]">
      <OrderLine label="卖" price="1262.0" size="100" />
      <svg className="ml-[5px] block h-[2px] w-[332px] shrink-0" viewBox="0 0 332 2"><path d="M0 1H332" stroke="#cfcfcf" strokeWidth="2" strokeDasharray="10 10" /></svg>
      <OrderLine label="买" price="1261.5" size="76" />
      <div className="flex h-[60px] items-center justify-center border-t-2 border-[#e3e3e3] text-[35.500px] text-[#666]">
        <span>分时成交</span>
      </div>
      <div className="-mt-[4px]">
        {TRADES.map((t, i) => <TradeRow key={i} t={t} />)}
      </div>
      <div className="-mt-[1px] ml-[11px] flex h-[58px] w-[322px] items-center justify-center rounded-[8px] border-2 border-[#e2e2e2] pt-[2px] text-[29.800px] text-[#666]">
        更多成交
        <svg className="mb-[2px] ml-[9px] h-[18px] w-[13px]" viewBox="0 0 13 18" fill="#999"><path d="M0 0L13 9 0 18Z" /></svg>
      </div>
    </div>
  );
}

function CommentBar() {
  return (
    <div className="flex h-[106px] items-start overflow-hidden pt-[28px]">
      <div className="ml-[45px] flex h-[90px] w-[90px] shrink-0 items-center justify-center rounded-full border-2 border-[#d8dade] bg-[#f6f7fa]">
        <svg className="h-[54px] w-[58px]" viewBox="0 0 58 54" fill="none" stroke="#666" strokeWidth="3.500" strokeLinecap="round">
          <path d="M31 45H9a5 5 0 0 1-5-5V9a5 5 0 0 1 5-5h40a5 5 0 0 1 5 5v15" />
          <path d="M22 14h13M16 25h16M22 35h6" />
          <path d="M48 30l9 5v11l-9 5-9-5V35z" strokeWidth="3" strokeLinejoin="round" />
          <circle cx="48" cy="40.500" r="1.500" />
        </svg>
      </div>
      <div className="ml-[36px] flex h-[90px] w-[864px] shrink-0 overflow-hidden rounded-full border-2 border-[#d4d6da] bg-[#f6f7fa] text-[42px] text-[#999]">
        <span className="flex flex-1 items-center pt-[3px] pl-[35px]">弹幕走一波<span className="-ml-[1px] font-['Noto_Sans_CJK_SC']">…</span></span>
        <div className="relative flex w-[106px] items-center border-l-2 border-[#d4d6da] bg-white pl-[25px] text-[43px] font-black text-[#e0560c]">
          <span className="-mt-[3px]">弹</span>
          <svg className="absolute top-[48px] left-[57px] h-[24px] w-[24px]" viewBox="0 0 24 24" fill="none" stroke="#fff" strokeWidth="3">
            <circle cx="12" cy="12" r="11" fill="#e0560c" strokeWidth="2" />
            <path d="M7 12l4 4 6-8" />
          </svg>
        </div>
      </div>
    </div>
  );
}

function ToolItem({ label, children }: { label: string; children: React.ReactNode }) {
  return (
    <div className="flex w-[201.500px] flex-col items-center pt-[5px]">
      <svg className="h-[66px] w-[68px]" viewBox="0 0 68 66" fill="none" stroke="#5f6062" strokeWidth="3.200">{children}</svg>
      <span className="mt-[10px] text-[35px] leading-[52px] text-[#666]">{label}</span>
    </div>
  );
}

function Toolbar() {
  return (
    <div className="flex h-[137px] border-t-2 border-[#d3d5d8] bg-[#f6f7fa]">
      <div className="flex w-[274px] flex-col items-center">
        <Caret className="mt-[8px] h-[7px] w-[20px] text-[#777]" d="M0 12L7.500 0 15 12Z" />
        <span className={`mt-[6px] text-[41.500px] leading-[56px] tracking-[-0.300px] ${GREEN}`}>3955.32</span>
        <div className="flex w-[274px] items-center justify-between pl-[41px] leading-[44px]">
          <span className="text-[35px] text-[#666]">上证</span>
          <span className={`text-[36.500px] tracking-[0.500px] ${GREEN}`}><Num>-0.53%</Num></span>
        </div>
      </div>
      <ToolItem label="交易">
        <path d="M20 9a27 27 0 0 1 38 35M48 54A27 27 0 0 1 11 20" />
        <path d="M2 24l9-5 1 9M66 38l-8 6-1-9" />
        <path d="M24 18l10 12 10-12M34 30v17M24 31h20M24 39h20" />
      </ToolItem>
      <ToolItem label="发帖">
        <path d="M44 6H13a5 5 0 0 0-5 5v43a5 5 0 0 0 5 5h43a5 5 0 0 0 5-5V22" />
        <path d="M51 17L29 39" strokeWidth="6" />
        <path d="M54 13l6-6" strokeWidth="6" />
        <path d="M31 33l-5 8 9-4z" fill="#5f6062" strokeWidth="1" />
      </ToolItem>
      <ToolItem label="功能">
        <rect x="9" y="8" width="22" height="22" rx="3" />
        <rect x="9" y="36" width="22" height="22" rx="3" />
        <rect x="36" y="36" width="22" height="22" rx="3" />
        <path d="M47 6.500L59.500 19 47 31.500 34.500 19z" strokeLinejoin="round" />
      </ToolItem>
      <ToolItem label="设自选">
        <circle cx="34" cy="33" r="26.500" />
        <path d="M22 33h.1M34 33h.1M46 33h.1" strokeWidth="5.500" strokeLinecap="round" />
      </ToolItem>
    </div>
  );
}

function SystemNav() {
  return (
    <svg className="block h-[125px] w-[1080px]" viewBox="0 0 1080 125" fill="none" stroke="#888" strokeWidth="6" strokeLinecap="round" strokeLinejoin="round">
      <path d="M280 47h40M280 62h40M280 77h40" />
      <path d="M514 59l26-19 26 19M522 65v9a3 3 0 0 0 3 3h30a3 3 0 0 0 3-3v-9" />
      <path d="M768 41l-8 6h38a3 3 0 0 1 3 3v24a3 3 0 0 1-3 3h-30" />
    </svg>
  );
}

export default function App() {
  return (
    <div className="flex h-[2376px] w-[1080px] flex-col overflow-hidden bg-[#fefefe] font-[Roboto,'Noto_Sans_CJK_SC',sans-serif]">
      <StatusBar />
      <Header />
      <QuotePanel />
      <Notice />
      <Tabs />
      <Summary />
      <div className="flex h-[1252px] border-b-2 border-[#d8d8d8]">
        <Charts />
        <TradePanel />
      </div>
      <CommentBar />
      <Toolbar />
      <SystemNav />
    </div>
  );
}
